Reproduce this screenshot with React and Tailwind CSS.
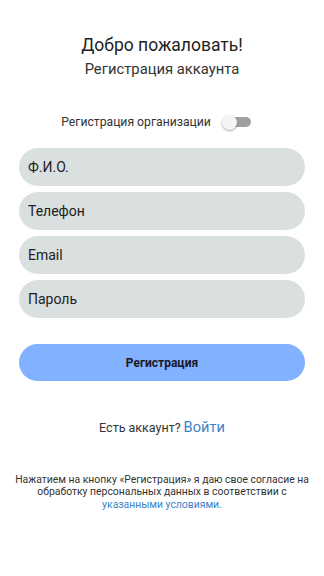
export default function App() {
  const font = { fontFamily: "Roboto, 'Noto Sans', sans-serif" };
  return (
    <div className="w-[324px] h-[576px] bg-white flex flex-col items-center text-[#222]" style={font}>
      <h1 className="mt-[34px] text-[17.5px] leading-[22px] text-[#222]">Добро пожаловать!</h1>
      <h2 className="mt-[4px] text-[14.8px] leading-[18px] text-[#333]">Регистрация аккаунта</h2>
      <div className="mt-[36px] flex items-center gap-[11px] mr-[11px]">
        <span className="text-[12.2px] leading-[16px] text-[#333]">Регистрация организации</span>
        <div className="relative w-[30px] h-[16px] flex items-center">
          <div className="absolute left-[6px] right-[1px] h-[10px] rounded-full bg-[#a0a0a0]" />
          <div className="absolute left-0 w-[15px] h-[15px] rounded-full bg-[#f5f5f5] shadow-[0_1px_2px_rgba(0,0,0,0.35)]" />
        </div>
      </div>
      <div className="mt-[18px] w-[286px] flex flex-col gap-[6px]">
        {["Ф.И.О.", "Телефон", "Email", "Пароль"].map((t) => (
          <div key={t} className="h-[38px] rounded-full bg-[#dadfe0] flex items-center px-[9px] text-[14px] text-[#222]">
            {t}
          </div>
        ))}
      </div>
      <button className="mt-[26px] w-[286px] h-[37px] rounded-full bg-[#82b1ff] text-[12px] font-bold text-[#1a1a2a]">
        Регистрация
      </button>
      <div className="mt-[36px] flex items-baseline gap-[3px]">
        <span className="text-[12.5px] text-[#333]">Есть аккаунт?</span>
        <span className="text-[14.6px] text-[#3b82c8]">Войти</span>
      </div>
      <p className="mt-[35px] px-[10px] text-center text-[10.4px] leading-[12.5px] text-[#333]">
        Нажатием на кнопку «Регистрация» я даю свое согласие на обработку персональных данных в соответствии с{" "}
        <span className="text-[#3b82c8]">указанными условиями.</span>
      </p>
    </div>
  );
}
